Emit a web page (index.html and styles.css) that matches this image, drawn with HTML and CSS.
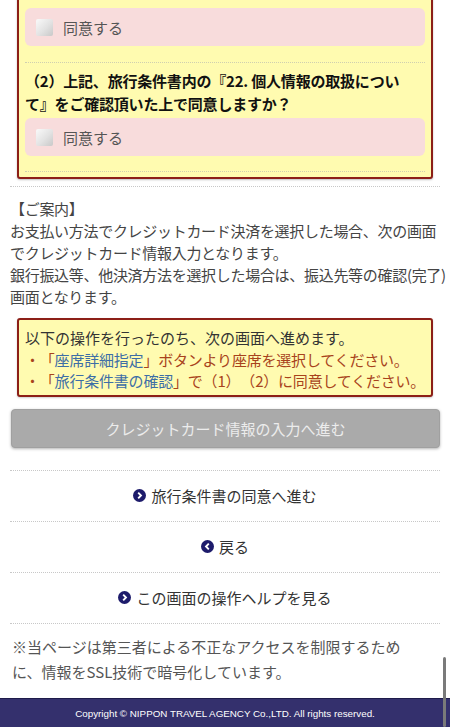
FILE: index.html
```html
<!DOCTYPE html>
<html>
<head>
    <meta charset="utf-8">
    <title>旅行条件書の確認</title>
    <link rel="stylesheet" href="styles.css">
</head>
<body>
<div class="page">
    <div class="agree-box">
        <label class="agree-check"><span class="check"></span>同意する</label>
        <div class="agree-sep"></div>
        <p class="agree-question">（2）上記、旅行条件書内の『22. 個人情報の取扱につい<br>て』をご確認頂いた上で同意しますか？</p>
        <label class="agree-check agree-check-2"><span class="check"></span>同意する</label>
        <div class="agree-sep agree-sep-last"></div>
    </div>

    <div class="guide">
        <p>【ご案内】<br>お支払い方法でクレジットカード決済を選択した場合、次の画面<br>でクレジットカード情報入力となります。<br>銀行振込等、他決済方法を選択した場合は、振込先等の確認(完了)<br>画面となります。</p>
    </div>

    <div class="warn-box">
        <p>以下の操作を行ったのち、次の画面へ進めます。</p>
        <p class="warn-item">・「<a href="#">座席詳細指定</a>」ボタンより座席を選択してください。</p>
        <p class="warn-item">・「<a href="#">旅行条件書の確認</a>」で（1）（2）に同意してください。</p>
    </div>

    <button class="btn-next" type="button">クレジットカード情報の入力へ進む</button>

    <ul class="link-list">
        <li><a href="#"><svg class="icon" viewBox="0 0 14 14"><circle cx="7" cy="7" r="7" fill="#1d1b6b"/><path d="M5.6 4 L8.6 7 L5.6 10" fill="none" stroke="#fff" stroke-width="2"/></svg>旅行条件書の同意へ進む</a></li>
        <li><a href="#"><svg class="icon" viewBox="0 0 14 14"><circle cx="7" cy="7" r="7" fill="#1d1b6b"/><path d="M8.4 4 L5.4 7 L8.4 10" fill="none" stroke="#fff" stroke-width="2"/></svg>戻る</a></li>
        <li><a href="#"><svg class="icon" viewBox="0 0 14 14"><circle cx="7" cy="7" r="7" fill="#1d1b6b"/><path d="M5.6 4 L8.6 7 L5.6 10" fill="none" stroke="#fff" stroke-width="2"/></svg>この画面の操作ヘルプを見る</a></li>
    </ul>

    <p class="ssl-note">※当ページは第三者による不正なアクセスを制限するため<br>に、情報をSSL技術で暗号化しています。</p>
</div>
<div class="footer">Copyright © NIPPON TRAVEL AGENCY Co.,LTD. All rights reserved.</div>
<div class="scrollbar"></div>
</body>
</html>
```

FILE: styles.css
```css
body {
    font-family: "Noto Sans CJK JP", "Liberation Sans", sans-serif;
    font-size: 15px;
    color: #444;
    background-color: #fff;
    margin: 0;
    overflow: hidden;
    text-spacing-trim: space-all;
}
p {
    margin: 0;
}
.page {
    padding: 0 10px;
}
.agree-box {
    margin: -12px 7px 0;
    padding: 0 6px 5px;
    background-color: #fffbb0;
    border: 2px solid #8c1f17;
    border-radius: 3px;
    box-shadow: 0 1px 2px rgba(0, 0, 0, 0.25);
}
.agree-check {
    display: flex;
    align-items: center;
    height: 38px;
    margin-top: 18px;
    padding-left: 11px;
    background-color: #f8dcdc;
    border-radius: 6px;
    color: #555;
    font-size: 15px;
}
.agree-check-2 {
    margin-top: 3px;
}
.check {
    width: 17px;
    height: 17px;
    margin-right: 10px;
    border-radius: 2px;
    background: linear-gradient(135deg, #fafafa 0%, #e2e2e2 55%, #c8c8c8 100%);
}
.agree-sep {
    margin-top: 16px;
    border-top: 1px dotted #cfcfb0;
}
.agree-sep-last {
    margin-top: 15px;
}
.agree-question {
    padding-top: 6px;
    font-weight: bold;
    color: #111;
    line-height: 23px;
    white-space: nowrap;
    letter-spacing: -0.2px;
}
.guide {
    margin-top: 7px;
    padding-top: 11px;
    border-top: 1px dotted #c8c8c8;
}
.guide p {
    line-height: 22px;
    white-space: nowrap;
    letter-spacing: -0.3px;
    color: #444;
}
.warn-box {
    margin: 10px 7px 0;
    padding: 7px 6px 3px;
    background-color: #fffbb0;
    border: 2px solid #8c1f17;
    border-radius: 3px;
    box-shadow: 0 1px 2px rgba(0, 0, 0, 0.2);
    line-height: 21.5px;
    color: #333;
}
.warn-item {
    color: #a8431c;
    white-space: nowrap;
    letter-spacing: -0.2px;
}
.warn-item a {
    color: #3d6ea6;
    text-decoration: none;
}
.btn-next {
    display: block;
    width: 429px;
    height: 39px;
    margin: 12px 0 0 1px;
    background-color: #aaaaaa;
    border: 1px solid #a0a0a0;
    border-radius: 4px;
    box-shadow: 0 1px 3px rgba(0, 0, 0, 0.3);
    color: #ececec;
    font-family: inherit;
    font-size: 15px;
    cursor: default;
}
.link-list {
    list-style: none;
    margin: 22px 0 0;
    padding: 0;
    border-top: 1px dotted #c8c8c8;
}
.link-list li {
    border-bottom: 1px dotted #c8c8c8;
}
.link-list a {
    display: flex;
    justify-content: center;
    align-items: center;
    height: 50px;
    color: #333;
    text-decoration: none;
}
.icon {
    width: 13px;
    height: 13px;
    margin-right: 5px;
}
.ssl-note {
    padding: 10px 2px 0;
    margin-bottom: 14px;
    line-height: 25px;
    color: #555;
}
.footer {
    height: 30px;
    line-height: 30px;
    background-color: #34306d;
    border-top: 1px solid #1e1b4a;
    color: #fff;
    font-family: "Liberation Sans", Arial, sans-serif;
    font-size: 9.8px;
    text-align: center;
}
.scrollbar {
    position: fixed;
    right: 4px;
    bottom: 0;
    width: 3px;
    height: 70px;
    background-color: #7a7a7a;
    border-radius: 2px;
}
```
